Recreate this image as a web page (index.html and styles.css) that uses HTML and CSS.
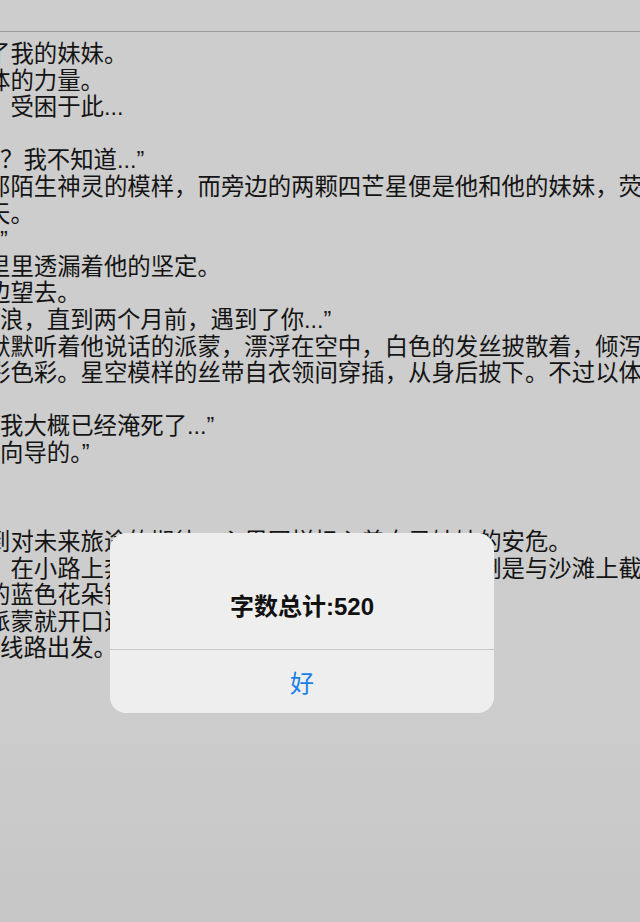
FILE: index.html
```html
<!DOCTYPE html>
<html lang="zh-CN">
<head>
  <meta charset="UTF-8" />
  <meta name="viewport" content="width=device-width, initial-scale=1.0"/>
  <title>字数统计</title>
  <link rel="stylesheet" href="styles.css">
</head>
<body>

<div class="topbar"></div>

<div class="doc">
  <div class="line">了我的妹妹。</div>
  <div class="line">体的力量。</div>
  <div class="line">，受困于此...</div>
  <div class="line blank"></div>
  <div class="line flush">？我不知道...”</div>
  <div class="line">那陌生神灵的模样，而旁边的两颗四芒星便是他和他的妹妹，荧</div>
  <div class="line">天。</div>
  <div class="line flush">”</div>
  <div class="line">里里透漏着他的坚定。</div>
  <div class="line">边望去。</div>
  <div class="line flush">浪，直到两个月前，遇到了你...”</div>
  <div class="line">默默听着他说话的派蒙，漂浮在空中，白色的发丝披散着，倾泻</div>
  <div class="line">彩色彩。星空模样的丝带自衣领间穿插，从身后披下。不过以体</div>
  <div class="line blank"></div>
  <div class="line flush">我大概已经淹死了...”</div>
  <div class="line flush">向导的。”</div>
  <div class="line blank"></div>
  <div class="line blank tall"></div>
  <div class="line">到对未来旅途的期待，心里同样担心着自己妹妹的安危。</div>
  <div class="line">，在小路上奔跑，接着爬上出口，出口上的景色倒是与沙滩上截</div>
  <div class="line">的蓝色花朵铺满了道路两旁。</div>
  <div class="line">派蒙就开口道：“就沿着</div>
  <div class="line flush">线路出发。</div>
</div>

<div class="alert">
  <div class="alert-body">
    <div class="alert-title">字数总计:520</div>
  </div>
  <div class="alert-btn">好</div>
</div>

</body>
</html>
```

FILE: styles.css
```css
html, body {
  margin: 0;
  height: 100%;
}

body {
  background: linear-gradient(#cdcdcd 75%, #c6c6c6);
  font-family: 'Liberation Sans', 'Noto Sans CJK SC', sans-serif;
  color: #141414;
  overflow: hidden;
  position: relative;
}

.topbar {
  height: 31px;
  border-bottom: 1px solid #9b9b9b;
}

.doc {
  padding-top: 9px;
  font-size: 23.4px;
  line-height: 26.6px;
}

.line {
  white-space: nowrap;
  margin-left: -13px;
  height: 26.6px;
}

.line.flush {
  margin-left: 0;
}

.line.tall {
  height: 36px;
}

.alert {
  position: absolute;
  left: 110px;
  top: 533px;
  width: 384px;
  height: 180px;
  background: #eeeeee;
  border-radius: 16px;
  display: flex;
  flex-direction: column;
  overflow: hidden;
}

.alert-body {
  height: 117px;
  border-bottom: 1px solid #c9c9c9;
  box-sizing: border-box;
  padding-top: 58px;
  text-align: center;
}

.alert-title {
  font-size: 24px;
  font-weight: bold;
  color: #111;
  line-height: 32px;
}

.alert-btn {
  flex: 1;
  display: flex;
  align-items: center;
  justify-content: center;
  font-size: 24px;
  color: #1a7fe8;
}
```
